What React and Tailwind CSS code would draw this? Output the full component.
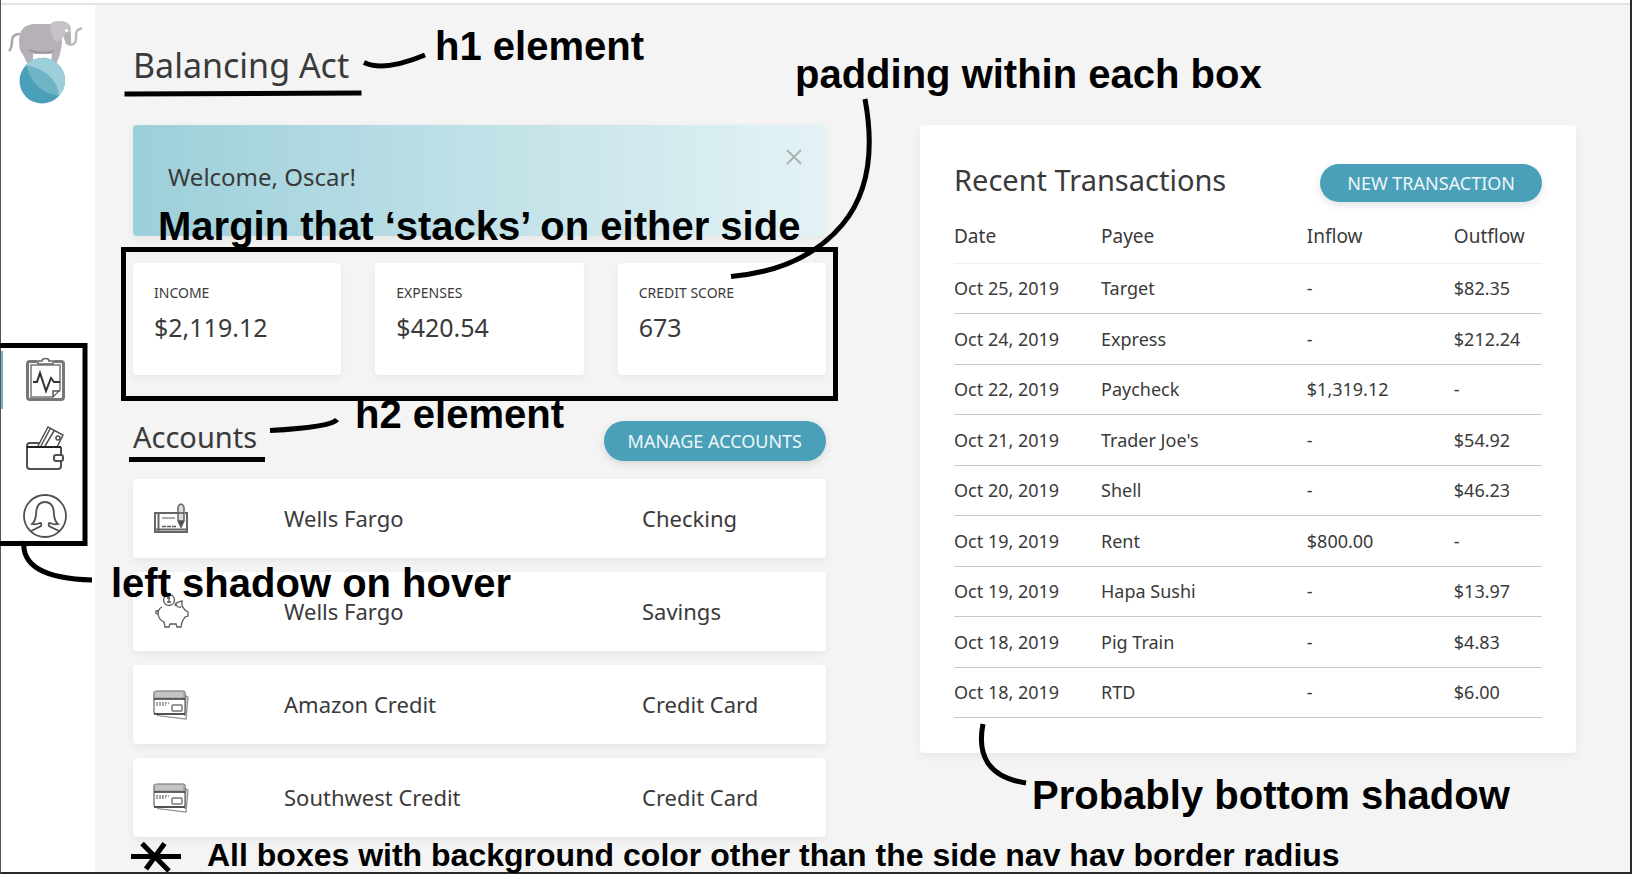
const transactions = [
  ["Oct 25, 2019", "Target", "-", "$82.35"],
  ["Oct 24, 2019", "Express", "-", "$212.24"],
  ["Oct 22, 2019", "Paycheck", "$1,319.12", "-"],
  ["Oct 21, 2019", "Trader Joe's", "-", "$54.92"],
  ["Oct 20, 2019", "Shell", "-", "$46.23"],
  ["Oct 19, 2019", "Rent", "$800.00", "-"],
  ["Oct 19, 2019", "Hapa Sushi", "-", "$13.97"],
  ["Oct 18, 2019", "Pig Train", "-", "$4.83"],
  ["Oct 18, 2019", "RTD", "-", "$6.00"],
];

const stats = [
  ["INCOME", "$2,119.12"],
  ["EXPENSES", "$420.54"],
  ["CREDIT SCORE", "673"],
];

function Logo() {
  return (
    <svg viewBox="8 18 78 88" className="h-[88px] w-[78px]" aria-hidden="true">
      <path d="M21 34 Q13 34 13 41 Q13 48 10 51" fill="none" stroke="#aaa6ac" strokeWidth="2.5" />
      <path d="M20 42 Q20 24 36 24 H58 Q63 28 63 42 Q62 54 57 64 H52 L53 54 Q42 54 34 54 L34 63 H28 Q24 54 22 52 Q20 48 20 42Z" fill="#b5b1b7" />
      <path d="M30 50 Q42 55 55 51" fill="none" stroke="#9b979d" strokeWidth="2" />
      <path d="M67 42 Q69 45 73 44.500 Q77 44 77 38 Q76 29 83 28.500" fill="none" stroke="#bbb8bd" strokeWidth="2.500" />
      <path d="M62 23 Q72 22 72 31 L72 44 Q65 44 65 37 Q61 33 62 23Z" fill="#b5b1b7" />
      <path d="M51 25 Q53 21 59 21 Q70 20 72 28 L72 32 Q66 32 65 36 Q62 42 57 41 Q52 38 51 25Z" fill="#c6c3c8" />
      <circle cx="67.500" cy="30.500" r="1.500" fill="#fff" />
      <circle cx="43" cy="81" r="22.500" fill="#4aa0b8" />
      <path d="M27 65 A22.500 22.500 0 0 1 60 96 Q34 92 27 65Z" fill="#6db4c6" />
      <path d="M27 65 A22.500 22.500 0 0 1 60 96 Q58 72 27 65Z" fill="#9ccfda" />
    </svg>
  );
}

function ClipboardIcon() {
  return (
    <svg viewBox="0 0 44 46" className="h-[46px] w-[44px]" fill="none" stroke="#555" strokeWidth="1.5" aria-hidden="true">
      <path d="M14 4.500H7Q4.500 4.500 4.500 7v33q0 2.500 2.500 2.500h31q2.500 0 2.500-2.500V7q0-2.500-2.500-2.500h-7" stroke="#777" strokeWidth="3" />
      <path d="M8 8h29v25l-7 7H8z" stroke="#777" />
      <path d="M30 40v-6h7" />
      <path d="M15 7V4h4q0-2.500 3.500-2.500T26 4h4v3z" fill="#fff" stroke="#666" />
      <path d="M10 25h4l3-9 6 18 5-13 3 4h6" stroke="#333" strokeWidth="2" />
    </svg>
  );
}

function WalletIcon() {
  return (
    <svg viewBox="0 0 44 46" className="h-[46px] w-[44px]" fill="none" stroke="#505050" strokeWidth="1.5" aria-hidden="true">
      <path d="M15 21 25 2l15 8-6 12M18 21l9-17M22 21l9-15" />
      <circle cx="35" cy="13" r="2" />
      <path d="M16 18H7q-3 0-3 3v20q0 3 3 3h28q3 0 3-3v-5M38 30v-8" strokeWidth="2" />
      <path d="M4 22h34" stroke="#222" strokeWidth="2" />
      <rect x="31" y="30" width="9" height="6" rx="2" fill="#fff" strokeWidth="2" />
    </svg>
  );
}

function ProfileIcon() {
  return (
    <svg viewBox="0 0 44 46" className="h-[46px] w-[44px]" fill="none" stroke="#505050" strokeWidth="1.8" aria-hidden="true">
      <circle cx="22" cy="23" r="21" />
      <path d="M8 38l10-5q1-3-1-3-4 2-8 1 3-2 4-9Q13 9 22 9t9 13q1 7 4 9-4 1-8-1-2 0-1 3l10 5" />
    </svg>
  );
}

function CheckIcon() {
  return (
    <svg viewBox="0 0 36 36" className="size-9" fill="none" stroke="#555" strokeWidth="1.5" aria-hidden="true">
      <path d="M25 12H2v19h32V12h-2M5.500 12v19M2 28.500h31" stroke="#666" strokeWidth="2" />
      <path d="M9 17h13" stroke="#aaa" strokeWidth="2" />
      <path d="M9 25.500h15" strokeDasharray="4 1" />
      <path d="M25 6q3-6 6 0v14l-3 6-3-6z" fill="#ddd" stroke="#666" />
      <path d="M25 12h6M26 20h4l-2 5z" fill="#444" />
    </svg>
  );
}

function PiggyIcon() {
  return (
    <svg viewBox="0 0 36 36" className="size-9" fill="none" stroke="#5a5a5a" strokeWidth="1.3" aria-hidden="true">
      <path d="M9 13q-4 2-4 7 1 6 6 8l1 5h4l1-3h6l1 3h4l1-5 3-5 3-1v-4l-3-2-3-4V7l-6 2-1 3" />
      <path d="M23 9q0 5 5 4M5 20q-3 0-2-3 2-1 2 1" />
      <circle cx="16" cy="6" r="5.5" />
      <path d="M16 3v6M14 4h3M14 8h4" />
    </svg>
  );
}

function CardIcon() {
  return (
    <svg viewBox="0 0 36 36" className="size-9" fill="none" stroke="#666" strokeWidth="1.2" aria-hidden="true">
      <path d="M31 8l4 2-2 22-29-3.500" fill="#fff" stroke="#888" />
      <path d="M33 9l-1 20" stroke="#888" />
      <path d="M4 4h26q2 0 2 2v19q0 2-2 2H3q-2 0-2-2V6q0-2 3-2z" fill="#fff" />
      <path d="M1.500 4.500h29.500v6.500H1.500z" fill="#c4c4c4" stroke="#999" />
      <path d="M1 12h31M1 27h31" stroke="#333" strokeWidth="1.5" />
      <path d="M3 16h13M3 18h10" stroke="#888" strokeWidth="1.500" strokeDasharray="2 1" />
      <rect x="19" y="18" width="10" height="6" rx="1" stroke="#777" strokeWidth="1.500" />
    </svg>
  );
}

const accounts = [
  [CheckIcon, "Wells Fargo", "Checking"],
  [PiggyIcon, "Wells Fargo", "Savings"],
  [CardIcon, "Amazon Credit", "Credit Card"],
  [CardIcon, "Southwest Credit", "Credit Card"],
];

function Sidebar() {
  return (
    <aside className="flex w-[94px] shrink-0 flex-col bg-white">
      <a href="#home" aria-label="Home" className="mt-[13px] pl-[6px]">
        <Logo />
      </a>
      <nav className="mt-[245px] flex flex-col gap-[10px]">
        <a href="#dashboard" aria-label="Dashboard" className="flex h-[58px] items-center border-l-2 border-[#6db4c6] pl-5">
          <ClipboardIcon />
        </a>
        <a href="#accounts" aria-label="Accounts" className="flex h-[58px] items-center border-l-2 border-transparent pl-5">
          <WalletIcon />
        </a>
        <a href="#profile" aria-label="Profile" className="flex h-[58px] items-center border-l-2 border-transparent pl-5">
          <ProfileIcon />
        </a>
      </nav>
    </aside>
  );
}

function WelcomeBanner() {
  return (
    <section className="flex items-start justify-between rounded bg-linear-to-r from-[#9ccfda] to-[#e4f3f5] shadow-[0_3px_8px_rgba(0,0,0,0.06)]">
      <p className="pt-9 pb-[43px] pl-[35px] text-2xl">Welcome, Oscar!</p>
      <button aria-label="Dismiss" className="mt-5 mr-5 flex size-6 items-center justify-center">
        <svg viewBox="0 0 16 16" className="size-4" stroke="#aab0b2" strokeWidth="1.8" aria-hidden="true">
          <path d="M1 1l14 14M15 1L1 15" />
        </svg>
      </button>
    </section>
  );
}

function Stats() {
  return (
    <section className="mt-[27px] grid grid-cols-3 gap-[34px]">
      {stats.map(([label, value]) => (
        <div key={label} className="rounded bg-white px-[21px] pt-5 pb-8 shadow-[0_3px_8px_rgba(0,0,0,0.05)]">
          <p className="text-sm leading-5">{label}</p>
          <p className="mt-2 text-[25px] leading-8">{value}</p>
        </div>
      ))}
    </section>
  );
}

function Accounts() {
  return (
    <section className="mt-[42px]">
      <div className="mb-[18px] flex items-start justify-between">
        <h2 className="text-[29px] leading-10">Accounts</h2>
        <button className="mt-1 h-10 rounded-full bg-[#4aa0b8] px-6 text-lg text-[#edf6f8] shadow-[0_3px_8px_rgba(0,0,0,0.12)]">
          MANAGE ACCOUNTS
        </button>
      </div>
      <ul className="flex flex-col gap-[14px]">
        {accounts.map(([Icon, bank, kind]) => (
          <li key={bank + kind} className="flex h-[79px] items-center rounded bg-white pl-5 text-[22px] shadow-[0_3px_8px_rgba(0,0,0,0.06)]">
            <span className="w-[131px]"><Icon /></span>
            <span className="flex-1">{bank}</span>
            <span className="w-[184px]">{kind}</span>
          </li>
        ))}
      </ul>
    </section>
  );
}

function Transactions() {
  return (
    <section className="rounded bg-white px-[34px] pt-[35px] pb-[35px] shadow-[0_3px_8px_rgba(0,0,0,0.06)]">
      <div className="flex items-start justify-between">
        <h2 className="text-[29px] leading-10">Recent Transactions</h2>
        <button className="mt-1 h-[38px] rounded-full bg-[#4aa0b8] px-[27px] text-lg text-[#edf6f8] shadow-[0_3px_8px_rgba(0,0,0,0.12)]">
          NEW TRANSACTION
        </button>
      </div>
      <table className="mt-[10px] h-[506px] w-full table-fixed text-left text-lg">
        <colgroup>
          <col className="w-[25%]" />
          <col className="w-[35%]" />
          <col className="w-[25%]" />
          <col className="w-[15%]" />
        </colgroup>
        <thead>
          <tr className="h-[51px] border-b border-[#eee] text-[19px]">
            {["Date", "Payee", "Inflow", "Outflow"].map((name) => (
              <th key={name} scope="col" className="font-normal">{name}</th>
            ))}
          </tr>
        </thead>
        <tbody>
          {transactions.map((row, i) => (
            <tr key={i} className="h-[50px] border-b border-[#c8c8c8]">
              {row.map((cell, j) => (
                <td key={j}>{cell}</td>
              ))}
            </tr>
          ))}
        </tbody>
      </table>
    </section>
  );
}

function Annotations() {
  return (
    <div className="pointer-events-none absolute top-0 -left-px font-['Liberation_Sans',sans-serif] text-[40px] leading-10 font-bold whitespace-nowrap text-black">
      <svg viewBox="0 0 1632 874" className="absolute top-0 left-0 h-[874px] w-[1632px] max-w-none" fill="none" stroke="#000" strokeWidth="5" aria-hidden="true">
        <path d="M124.500 94 361.500 93" />
        <path d="M364 62.500Q384 72 425 55" />
        <rect x="123.500" y="249.500" width="712" height="149" />
        <path d="M865 99Q880 180 842 225T731 276.500" />
        <path d="M129 459.500H265" />
        <path d="M270 430.500Q332 427 337 419.500" />
        <path d="M0 345.500H85V543.500H0" />
        <path d="M24 541Q20 578 92 580" />
        <path d="M983 724Q973 775 1026 783" />
        <path d="M131 856.500H181M142 843.500 169 871M164.500 843.500 146 869" />
      </svg>
      <p className="absolute top-[26px] left-[435px]">h1 element</p>
      <p className="absolute top-[54px] left-[795px]">padding within each box</p>
      <p className="absolute top-[206px] left-[158px]">Margin that ‘stacks’ on either side</p>
      <p className="absolute top-[394px] left-[355px]">h2 element</p>
      <p className="absolute top-[563px] left-[111px]">left shadow on hover</p>
      <p className="absolute top-[775px] left-[1032px]">Probably bottom shadow</p>
      <p className="absolute top-[839px] left-[207px] text-[32px] leading-8">
        All boxes with background color other than the side nav hav border radius
      </p>
    </div>
  );
}

export default function App() {
  return (
    <div className="relative flex min-h-screen flex-col border-r-2 border-b-2 border-l border-[#2a2a2a] border-l-[#555] bg-[#f4f4f4] font-['Noto_Sans',sans-serif] text-[#3a3a3a]">
      <div className="h-[5px] border-b-2 border-[#e4e4e4] bg-white" />
      <div className="flex flex-1">
        <Sidebar />
        <main className="min-w-0 flex-1 pt-10 pr-[54px] pl-[38px]">
          <h1 className="text-[34px] leading-10">Balancing Act</h1>
          <div className="mt-10 grid grid-cols-[693fr_656fr] items-start gap-[94px]">
            <div>
              <WelcomeBanner />
              <Stats />
              <Accounts />
            </div>
            <Transactions />
          </div>
        </main>
      </div>
      <Annotations />
    </div>
  );
}
